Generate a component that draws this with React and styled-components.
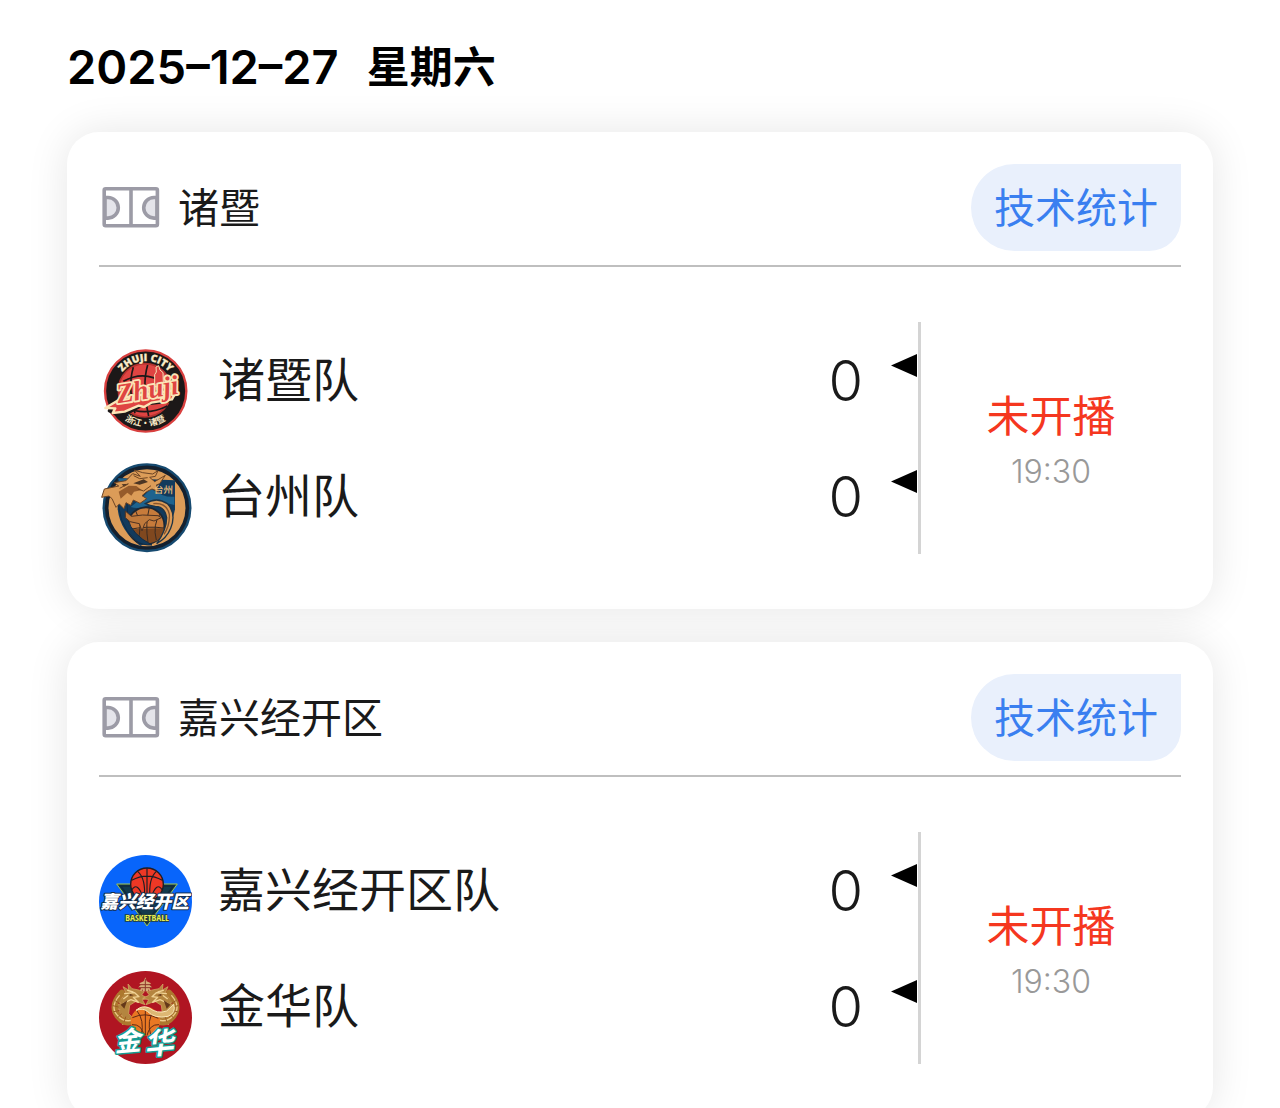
import React from "react";
import styled, { createGlobalStyle } from "styled-components";

const GlobalStyle = createGlobalStyle`
  *, *::before, *::after { box-sizing: border-box; }
  body {
    margin: 0;
    background: #ffffff;
    color: #1a1a1a;
    font-family: Inter, "Noto Sans CJK SC", sans-serif;
  }
`;

const Page = styled.main`
  height: 100vh;
  overflow: hidden;
  padding: 35px 67px 0;
`;

const DateHeading = styled.h1`
  display: flex;
  align-items: center;
  gap: 28px;
  margin: 0 0 33px;
  color: #000000;
  font-size: 43px;
  font-weight: 600;
  line-height: 64px;
`;

const DateValue = styled.time`
  font-size: 47px;
`;

const GameList = styled.div`
  display: flex;
  flex-direction: column;
  gap: 33px;
`;

const Card = styled.article`
  padding: 32px 32px 55px;
  border-radius: 32px;
  background: #ffffff;
  box-shadow: 0 0 42px rgba(0, 0, 0, 0.1);
`;

const CardHeader = styled.header`
  display: flex;
  align-items: center;
  gap: 15px;
  padding-bottom: 14px;
  border-bottom: 2px solid #bfbfbf;
`;

const Venue = styled.h2`
  flex: 1;
  margin: 0;
  font-size: 41px;
  font-weight: 400;
  line-height: 60px;
`;

const StatsButton = styled.button`
  height: 87px;
  padding: 0 23px;
  border: 0;
  border-radius: 44px 0 32px 44px;
  background: #e9f0fc;
  color: #3a7ff0;
  font-family: inherit;
  font-size: 41px;
  line-height: 60px;
  cursor: pointer;
`;

const CardBody = styled.div`
  display: grid;
  grid-template-columns: 1fr 260px;
  margin-top: 55px;
`;

const Teams = styled.div`
  border-right: 3px solid #d4d4d4;
`;

const TeamRow = styled.div`
  display: flex;
  align-items: center;
  height: 116px;
`;

const Crest = styled.svg`
  flex: none;
  align-self: flex-end;
  width: 93px;
  height: 93px;
  margin-right: 26px;
`;

const TeamName = styled.span`
  flex: 1;
  font-size: 47px;
  line-height: 64px;
`;

const Score = styled.span`
  padding-top: 2px;
  font-size: 56px;
  font-weight: 350;
  line-height: 64px;
`;

const Marker = styled.span`
  align-self: flex-start;
  width: 26px;
  height: 23px;
  margin: 32px 1px 0 28px;
  background: #000000;
  clip-path: polygon(0 50%, 100% 0, 100% 100%);
`;

const Status = styled.div`
  display: flex;
  flex-direction: column;
  align-items: center;
  justify-content: center;
  padding-top: 3px;
`;

const StatusText = styled.span`
  color: #f5371f;
  font-size: 43px;
  line-height: 64px;
`;

const StartTime = styled.time`
  color: #999999;
  font-size: 32px;
  font-weight: 350;
  line-height: 48px;
`;

const CourtIcon = () => (
  <svg width="64" height="64" viewBox="0 1 64 64" fill="none" stroke="#9c9ba6" strokeWidth="3.6" aria-hidden="true">
    <path d="M6 22.500h3a10.300 10.300 0 0 1 0 20.600h-3z" fill="#e4e4ea" />
    <path d="M58 22.500h-3a10.300 10.300 0 0 0 0 20.600h3z" fill="#e4e4ea" />
    <rect x="5.200" y="13.700" width="53.200" height="37" rx="1.500" />
    <path d="M32 13.700v37" />
  </svg>
);

const ZhujiCrest = () => (
  <Crest viewBox="27 15 279 279" role="img" aria-label="诸暨队">
    <defs>
      <path id="zhujiTop" d="M77 153a90 90 0 0 1 180 0" />
      <path id="zhujiBottom" d="M56 149a110 110 0 0 0 220 0" />
    </defs>
    <circle cx="167" cy="153" r="122" fill="#1c1818" stroke="#d9403f" strokeWidth="7" />
    <circle cx="165" cy="151" r="80" fill="#df4442" stroke="#b4322f" strokeWidth="5" />
    <g fill="none" stroke="#1c1818" strokeWidth="5">
      <path d="M100 124q62-35 121 4" />
      <path d="M130 82q-18 60 5 138" />
      <path d="M173 75q-18 60 3 153" />
      <path d="M100 202q70 28 132-4" />
    </g>
    <path d="M194 140v-36l5-8-1-15 8-4 4 13 9 8 1 34 14 10z" fill="#df4442" stroke="#f8e0b4" strokeWidth="3" />
    <path d="M58 212l22-22 40-22 120-18 30 4-20 28-88 10-40 22-44 8z" fill="#df4442" stroke="#1c1818" strokeWidth="10" strokeLinejoin="round" />
    <path d="M46 204l50-30 30-6 122-16 10 4-12 22-62 10-22 13-16-4-42 18-36 4 8-14z" fill="#df4442" stroke="#fbe5b7" strokeWidth="7" strokeLinejoin="round" />
    <text x="84" y="190" transform="rotate(-9 84 190)" fontFamily="'Liberation Serif', serif" fontStyle="italic" fontWeight="700" fontSize="82" fill="#df4442" stroke="#fbe5b7" strokeWidth="11" strokeLinejoin="round" paintOrder="stroke">Zhuji</text>
    <text fontFamily="'Open Sans', sans-serif" fontWeight="800" fontSize="30" fill="#fbebc7" stroke="#fbebc7" strokeWidth="1" textAnchor="middle">
      <textPath href="#zhujiTop" startOffset="50%">ZHUJI CITY</textPath>
    </text>
    <text fontFamily="'Noto Sans CJK SC', sans-serif" fontWeight="700" fontSize="26" fill="#fbebc7" textAnchor="middle">
      <textPath href="#zhujiBottom" startOffset="50%">浙江·诸暨</textPath>
    </text>
  </Crest>
);

const TaizhouCrest = () => (
  <Crest viewBox="27 18 279 279" role="img" aria-label="台州队">
    <circle cx="171" cy="158" r="129" fill="#dc9c58" stroke="#164a70" strokeWidth="9" />
    <circle cx="171" cy="158" r="121" fill="none" stroke="#14202e" strokeWidth="11" />
    <path d="M83 69l172 7v87q-8 50-62 90l-42 20q-60-44-68-110z" fill="#123a5c" />
    <path d="M183 101q40 28 70 24v25q-50-14-83 2-23 11-48 4 34-25 61-55zM85 70l50 4-43 25z" fill="#1e638e" />
    <circle cx="168" cy="212" r="55" fill="#c77b3b" stroke="#1c2632" strokeWidth="5" />
    <path d="M114 224q50-6 108-4-4 43-54 46-42-3-54-42z" fill="#80481f" />
    <g fill="none" stroke="#3a2b22" strokeWidth="3">
      <path d="M114 224q58-12 108-5M178 158q-13 50-4 104M137 168q24 44 4 96M211 175q-24 35-12 80" />
    </g>
    <path d="M86 112q-8 92 50 144 22 16 50 14-62-32-72-78l-4-60z" fill="#123a5c" stroke="#0f2c47" strokeWidth="3" />
    <path d="M43 102l43-9-13-10 35-6 20-21 23 8-18-19 25 8 30 4 16-10-8 17-17 3 15 13 32-19-17 25-10 4 7 20-20-8-16 8-14 12 14 9-20 14-20-10-8 16-14-8-6 18-14-14-10 10-12-26-9-8-22 4z" fill="#dc9c58" stroke="#6c4425" strokeWidth="3" strokeLinejoin="round" />
    <path d="M86 110l30-18 23 1 16 12-23 5-8 12-12-9-20 18z" fill="#965b2b" />
    <path d="M130 85l31-12 13 8-25 8zM95 88l22-2-15 9z" fill="#4b3524" />
    <path d="M131 62l18 9 24-3M143 102l18 6 22-16M89 100l26-14" fill="none" stroke="#704420" strokeWidth="3" />
    <path d="M106 168l18 16 34-4 46 2 10 6-22 10-14-4-14 12-8 22-8-22-28-6-14-12z" fill="#c07a3c" stroke="#4e3222" strokeWidth="3" strokeLinejoin="round" />
    <path d="M166 146q34-22 66 0 28 30 10 74-12 30-42 46 30-42 30-78-6-34-34-34-16-2-30-8z" fill="#dc9c58" stroke="#1d3345" strokeWidth="4" />
    <path d="M190 146q40-4 48 32 2 34-16 60" fill="none" stroke="#87552d" strokeWidth="4" />
    <text x="191" y="114" transform="rotate(2 191 114)" fontFamily="'Noto Sans CJK SC', sans-serif" fontWeight="500" fontSize="29" fill="#edbd7b">台州</text>
  </Crest>
);

const JiaxingCrest = () => (
  <Crest viewBox="27 21 279 279" role="img" aria-label="嘉兴经开区队">
    <circle cx="166.500" cy="160.500" r="139.500" fill="#0865fb" />
    <path d="M80 108h182l-91 126z" fill="#123a4c" stroke="#a2c653" strokeWidth="3" />
    <path d="M92 114h158l-79 108z" fill="none" stroke="#102a3b" strokeWidth="5" />
    <circle cx="171" cy="109" r="49" fill="#ed3825" stroke="#1e1e24" strokeWidth="4" />
    <g fill="none" stroke="#1e1e24" strokeWidth="3.500">
      <path d="M171 61v90M125 97q47-25 92 0M143 70q25 22 20 80M199 70q-24 22-19 80M125 126q18-28 35 25M217 126q-18-28-34 25" />
    </g>
    <text x="164" y="180" textAnchor="middle" fontFamily="'Noto Sans CJK SC', sans-serif" fontStyle="italic" fontWeight="900" fontSize="53" fill="#ffffff" stroke="#162d49" strokeWidth="6" strokeLinejoin="round" paintOrder="stroke">嘉兴经开区</text>
    <text x="171" y="218" textAnchor="middle" fontFamily="'Liberation Sans Narrow', 'Open Sans Condensed', 'Roboto Condensed', 'Liberation Sans', sans-serif" fontWeight="700" fontSize="28" fill="#e5ed53" stroke="#263c34" strokeWidth="5" paintOrder="stroke">BASKETBALL</text>
  </Crest>
);

const GoldDragon = () => (
  <g strokeLinecap="round" strokeLinejoin="round">
    <path d="M146 75l-20-4-12-14 2 18-17-10 8 18-24 3 15 11-25 9 19 8-24 16 22 4-13 23 19-6 2 29 16-18 27 8-25-24 3-25 19-12 27 10-8-15 18-4-20-10 7-9z" fill="#b4853f" stroke="#d9b06a" strokeWidth="2" />
    <path d="M96 83q-38 39-11 73 24 30 60 3" fill="none" stroke="#ad782e" strokeWidth="18" />
    <path d="M88 92q-30 34-4 61 22 24 56 8" fill="none" stroke="#ecca88" strokeWidth="4" />
    <path d="M75 107l14 8M69 122l16 4M71 140l16-3M83 158l11-11M103 169l4-13" stroke="#9b5b26" strokeWidth="3" />
    <path d="M104 86l30-3 13 12-17 2 15 15-22-8-21 10M113 76l16 5M101 101l12-9" fill="none" stroke="#f1d395" strokeWidth="4" />
    <path d="M119 86l12 5-12 2zM92 119l20-13-9 25z" fill="#653819" />
  </g>
);

const JinhuaCrest = () => (
  <Crest viewBox="27 18 279 279" role="img" aria-label="金华队">
    <circle cx="166.500" cy="157.500" r="139.500" fill="#b01522" />
    <path d="M166 37l4 12 13 6-5 4 8 8-7 3 4 9h-34l4-9-8-3 8-8-5-4 13-6z" fill="#d8ac79" />
    <path d="M151 59h31M147 68h38M157 74v8M176 74v8M166 42v37" stroke="#8c3829" strokeWidth="3" />
    <GoldDragon />
    <g transform="translate(333 0) scale(-1 1)"><GoldDragon /></g>
    <circle cx="166" cy="169" r="44" fill="#e97823" />
    <g fill="none" stroke="#602a15" strokeWidth="3">
      <path d="M166 126v86M127 158q39-18 78 2M140 136q24 30 14 73M193 136q-24 30-11 73M126 179q29-2 36 32M207 179q-28-2-36 32" />
    </g>
    <path d="M138 136q18-16 38-8 27 20 54 10l21-20q8 26-17 36-40 8-62-15-14-11-34-3z" fill="#ddb773" stroke="#fae7b8" strokeWidth="3" />
    <g fontFamily="'Noto Sans CJK SC', sans-serif" fontStyle="italic" fontWeight="700" fill="#ffffff" stroke="#159c93" strokeWidth="9" strokeLinejoin="round" paintOrder="stroke">
      <text x="74" y="260" fontSize="80" transform="rotate(-5 74 260)">金</text>
      <text x="165" y="270" fontSize="88" transform="rotate(-5 165 270)">华</text>
    </g>
  </Crest>
);

const games = [
  {
    venue: "诸暨",
    teams: [
      { name: "诸暨队", score: 0, Logo: ZhujiCrest },
      { name: "台州队", score: 0, Logo: TaizhouCrest },
    ],
  },
  {
    venue: "嘉兴经开区",
    teams: [
      { name: "嘉兴经开区队", score: 0, Logo: JiaxingCrest },
      { name: "金华队", score: 0, Logo: JinhuaCrest },
    ],
  },
];

function GameCard({ venue, teams }) {
  return (
    <Card>
      <CardHeader>
        <CourtIcon />
        <Venue>{venue}</Venue>
        <StatsButton type="button">技术统计</StatsButton>
      </CardHeader>
      <CardBody>
        <Teams>
          {teams.map(({ name, score, Logo }) => (
            <TeamRow key={name}>
              <Logo />
              <TeamName>{name}</TeamName>
              <Score>{score}</Score>
              <Marker />
            </TeamRow>
          ))}
        </Teams>
        <Status>
          <StatusText>未开播</StatusText>
          <StartTime dateTime="19:30">19:30</StartTime>
        </Status>
      </CardBody>
    </Card>
  );
}

export default function App() {
  return (
    <Page>
      <GlobalStyle />
      <DateHeading>
        <DateValue dateTime="2025-12-27">2025–12–27</DateValue>
        <span>星期六</span>
      </DateHeading>
      <GameList>
        {games.map((game) => (
          <GameCard key={game.venue} {...game} />
        ))}
      </GameList>
    </Page>
  );
}
